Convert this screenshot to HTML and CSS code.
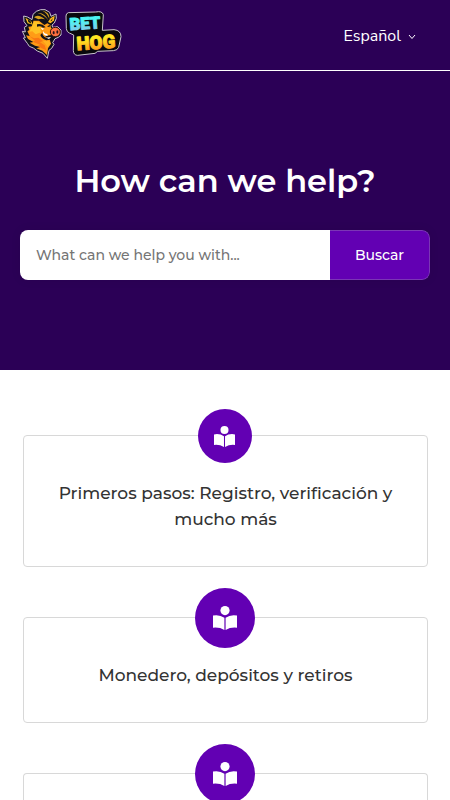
FILE: index.html
```html
<!DOCTYPE html>
<html lang="es">
<head>
<meta charset="utf-8">
<meta name="viewport" content="width=device-width, initial-scale=1">
<title>BetHog</title>
<link rel="stylesheet" href="styles.css">
</head>
<body>
<svg class="sprite" aria-hidden="true">
  <symbol id="reader" viewBox="0 0 24 24">
    <circle cx="12" cy="4.600" r="4.600"/>
    <path d="M0 9.600Q6.500 8.300 11.400 11.800V24Q6.500 21 0 21.700ZM24 9.600Q17.500 8.300 12.600 11.800V24Q17.500 21 24 21.700Z"/>
  </symbol>
</svg>
<header class="header">
  <a class="logo" href="#" aria-label="BetHog">
    <svg viewBox="0 0 345 210" aria-hidden="true">
      <path d="M26 48L38 51L51 59L54 43L64 34L77 29L90 29L104 37L108 49L123 42L124 55L118 69L111 75L113 82L128 80L138 90L138 105L130 112L120 116L113 128L117 133L110 145L102 151L97 175L84 160L67 153L55 144L43 139L37 130L25 114L31 113L22 94L31 96L28 82L36 77L27 65Z" fill="#10101a" stroke="#c9c3cd" stroke-width="3" stroke-linejoin="round"/>
      <path d="M31 53L48 63L54 74L38 70Z" fill="#ffc31e"/>
      <path d="M38 57L47 64L49 71L40 66Z" fill="#17171b"/>
      <path d="M119 47L117 61L107 70L99 66L107 54Z" fill="#ffb719"/>
      <path d="M113 54L111 62L106 64Z" fill="#252019"/>
      <path d="M55 62L72 62L88 75L97 70L106 75L108 84L116 88L109 105L90 108L104 118L108 131L99 145L96 165L82 152L64 145L76 141L60 137L44 128L55 126L39 117L33 106L44 108L37 94L43 90L40 80L53 79Z" fill="#ff9c16"/>
      <path d="M57 64L70 65L84 77L76 84L78 97L62 103L52 94L43 95L48 84Z" fill="#ffc324"/>
      <path d="M43 108L57 115L70 113L84 123L75 127L89 136L94 151L80 145L69 137L75 134L53 125L60 122Z" fill="#f97713"/>
      <path d="M57 52Q69 40 90 58Q78 55 70 58ZM68 39Q88 36 101 62Q87 44 68 39ZM82 32Q105 36 103 58Q98 40 82 32Z" fill="#d7a11d"/>
      <path d="M66 73Q80 68 92 82L84 83Q76 77 66 80ZM96 79L106 74L103 82Z" fill="#17161a"/>
      <path d="M77 83L88 86L82 90Z" fill="#fff"/>
      <path d="M82 98Q82 107 93 113L110 110L104 119L94 121Q78 115 76 105Z" fill="#17161a"/>
      <path d="M84 93Q82 107 98 108L97 102Q88 102 84 93ZM94 113L108 111L102 117Z" fill="#fff"/>
      <ellipse cx="121" cy="96" rx="15" ry="14" fill="#ff7040" stroke="#32150f" stroke-width="3"/>
      <ellipse cx="116" cy="98" rx="3" ry="5" fill="#281318"/>
      <ellipse cx="127" cy="96" rx="3" ry="5" fill="#281318"/>
      <path d="M84 123L102 123L107 131L98 141L91 131Z" fill="#ffb11f"/>
      <path d="M160 38L242 36Q262 32 265 44L262 91L297 89Q318 91 318 110L311 142Q308 151 295 152L248 154L240 160L188 166Q176 166 175 152L176 105L163 99Q155 96 154 86L153 48Q153 40 160 38Z" fill="#09090d" stroke="#c8c4cb" stroke-width="3"/>
      <g class="logo-type">
        <text class="logo-bet" x="165" y="91" transform="rotate(-4 165 91)">BET</text>
        <text class="logo-hog" x="186" y="151" transform="rotate(-4 186 151)">HOG</text>
      </g>
      <defs>
        <linearGradient id="blue" x2="0" y2="1"><stop offset=".3" stop-color="#4df5f3"/><stop offset=".8" stop-color="#7dcdec"/></linearGradient>
        <linearGradient id="gold" x2="0" y2="1"><stop offset=".3" stop-color="#ffe822"/><stop offset=".8" stop-color="#ffa01d"/></linearGradient>
      </defs>
    </svg>
  </a>
  <button class="language" type="button">Español
    <svg viewBox="0 0 8 6" aria-hidden="true"><path d="M1 1L4 4.500L7 1"/></svg>
  </button>
</header>
<section class="hero">
  <h1>How can we help?</h1>
  <form class="search" role="search">
    <input type="search" aria-label="What can we help you with..." placeholder="What can we help you with...">
    <button type="submit">Buscar</button>
  </form>
</section>
<main class="cards">
  <a class="card" href="#">
    <span class="badge badge-small"><svg aria-hidden="true"><use href="#reader"/></svg></span>
    <h2>Primeros pasos: Registro, verificación y mucho más</h2>
  </a>
  <a class="card" href="#">
    <span class="badge"><svg aria-hidden="true"><use href="#reader"/></svg></span>
    <h2>Monedero, depósitos y retiros</h2>
  </a>
  <div class="card card-open">
    <span class="badge"><svg aria-hidden="true"><use href="#reader"/></svg></span>
  </div>
</main>
</body>
</html>
```
FILE: styles.css
```css
* { box-sizing: border-box; }
body {
  margin: 0;
  min-height: 100vh;
  display: flex;
  flex-direction: column;
  background: #fff;
  color: #333;
  font-family: Montserrat, Inter, sans-serif;
}
button, input { font: inherit; }
.sprite { position: absolute; width: 0; height: 0; }
.header {
  display: flex;
  align-items: center;
  justify-content: space-between;
  padding: 0 34px 0 15px;
  background: #2b0056;
  border-bottom: 1px solid #fff;
}
.logo svg { display: block; width: 115px; height: 70px; }
.logo-type {
  font-family: Roboto, "Open Sans", sans-serif;
  font-weight: 900;
  stroke-width: 3px;
  stroke-linejoin: round;
}
.logo-bet { font-size: 50px; fill: url(#blue); stroke: url(#blue); }
.logo-hog { font-size: 56px; fill: url(#gold); stroke: url(#gold); }
.language {
  display: flex;
  align-items: center;
  gap: 7px;
  padding: 2px 0 0;
  border: 0;
  background: none;
  color: #fff;
  font-family: "Nunito Sans", Nunito, "Noto Sans", sans-serif;
  font-size: 16px;
  line-height: 24px;
}
.language svg {
  width: 8px;
  height: 6px;
  margin-top: 2px;
  fill: none;
  stroke: #fff;
}
.hero {
  padding: 86px 20px 90px;
  background: #2b0056;
}
h1 {
  margin: 0 0 25px;
  color: #fff;
  font-size: 32px;
  font-weight: 600;
  line-height: 48px;
  text-align: center;
}
.search {
  display: flex;
  height: 50px;
  overflow: hidden;
  border-radius: 8px;
  box-shadow: 0 0 12px rgba(0, 0, 0, 0.06);
}
.search input {
  flex: 1;
  min-width: 0;
  padding: 0 16px;
  border: 0;
  border-radius: 0;
  outline: 0;
  appearance: none;
  background: #fff;
  font-size: 14px;
  font-weight: 500;
}
.search input::placeholder { color: #757575; opacity: 1; }
.search button {
  width: 100px;
  padding: 0;
  border: 1px solid #7b36b5;
  border-left: 0;
  border-radius: 0 8px 8px 0;
  background: #6200b3;
  color: #fff;
  font-size: 14px;
  font-weight: 500;
}
.cards {
  flex: 1;
  display: flex;
  flex-direction: column;
  gap: 50px;
  padding: 65px 22px 0 23px;
  overflow: clip;
}
.card {
  position: relative;
  padding: 44px 24px 34px;
  border: 1px solid #d8d8d8;
  border-radius: 4px;
  color: #333;
  text-align: center;
  text-decoration: none;
}
.card-open {
  flex: 1;
  padding: 0;
  border-bottom: 0;
  border-radius: 4px 4px 0 0;
}
.card h2 {
  margin: 0;
  font-size: 17px;
  font-weight: 500;
  line-height: 26px;
}
.badge {
  position: absolute;
  top: 0;
  left: calc(50% - 1px);
  display: grid;
  place-items: center;
  width: 60px;
  height: 60px;
  border-radius: 50%;
  background: #6200b3;
  transform: translate(-50%, -50%);
}
.badge svg { width: 24px; height: 24px; fill: #fff; }
.badge-small { width: 54px; height: 54px; }
.badge-small svg { width: 21px; height: 21px; }
```
